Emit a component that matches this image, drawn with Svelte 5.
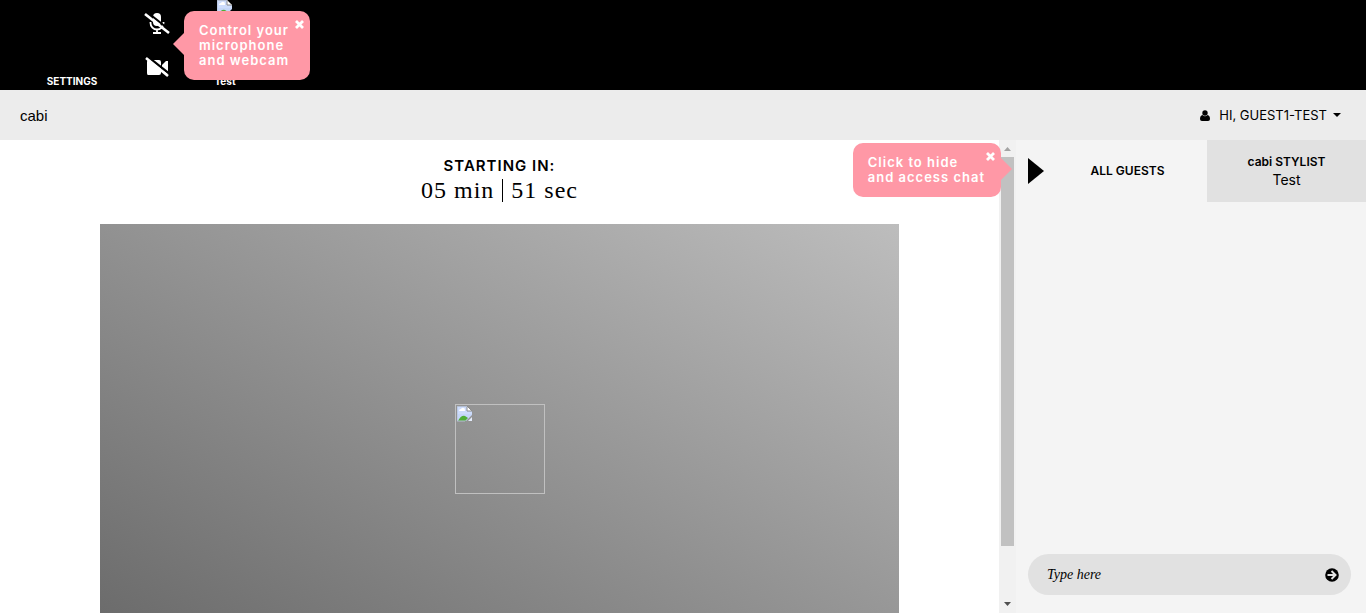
<script>
  let showDevices = $state(true);
  let showChat = $state(true);
  let message = $state('');
</script>

{#snippet broken()}
  <svg class="broken" width="16" height="16" viewBox="0 0 16 16" aria-hidden="true">
    <path d="M0 0h10l5 5v4l-6 6H0z" fill="#c5d6f8" />
    <path d="M1 1h9v5h5v2H1z" fill="#cddcfb" />
    <path d="M2 5q0-2 2-2 1-2 3-1 1 0 1 3z" fill="#fff" />
    <path d="M1 15q3-6 7-5l3 2-3 3z" fill="#4fae35" />
    <path d="M10 0l5 5h-5z" fill="#fff" stroke="#8c8c8c" />
    <path d="M11 15l4-4v4z" fill="#e4ecfb" />
    <path d="M0 0v15h8M0 .5h10" fill="none" stroke="#b4bfd4" />
  </svg>
{/snippet}

{#snippet cross()}
  <svg width="9" height="9" viewBox="0 0 9 9" aria-hidden="true">
    <path d="M1 1l7 7M8 1L1 8" stroke="#fff" stroke-width="2.8" />
  </svg>
{/snippet}

<div class="page">
  <div class="stage">
    <button class="settings">SETTINGS</button>
    <div class="devices">
      <button aria-label="Microphone">
        <svg width="26" height="22" viewBox="0 0 26 22">
          <rect x="9" y="0" width="8" height="13" rx="4" fill="#fff" />
          <path d="M6.500 9v1a6.500 6.500 0 0 0 13 0V9M13 16v4M9 20h8" fill="none" stroke="#fff" stroke-width="1.800" />
          <path d="M3 -1L27 18" stroke="#000" stroke-width="2" />
          <path d="M1 1L25 20" stroke="#fff" stroke-width="2.600" />
        </svg>
      </button>
      <button aria-label="Webcam">
        <svg width="26" height="22" viewBox="0 0 26 22">
          <path d="M4 3h11q2 0 2 2v11q0 2-2 2H4q-1 0-1-2V5q0-2 1-2zM18 8l4-4h2v13h-2l-4-4z" fill="#fff" />
          <path d="M4 0L27 18" stroke="#000" stroke-width="2.500" />
          <path d="M2 1L24 19" stroke="#fff" stroke-width="2.600" />
        </svg>
      </button>
    </div>
    <div class="person">
      {@render broken()}
      <span>Test</span>
    </div>
    {#if showDevices}
      <div class="tip left">
        Control your<br />microphone<br />and webcam
        <button aria-label="Close" onclick={() => (showDevices = false)}>{@render cross()}</button>
      </div>
    {/if}
  </div>

  <header>
    <a class="logo" href="#home">cabi</a>
    <button class="account">
      <svg width="10" height="11" viewBox="0 0 10 11" aria-hidden="true">
        <circle cx="5" cy="3" r="2.700" />
        <path d="M2.500 5Q5 7.500 7.500 5 10 5.500 10 9q0 2-2 2H2Q0 11 0 9q0-3.500 2.500-4z" />
      </svg>
      <span>HI, GUEST1-TEST</span>
      <svg width="8" height="4" viewBox="0 0 8 4" aria-hidden="true"><path d="M0 0h8L4 4z" /></svg>
    </button>
  </header>

  <main>
    <section class="show">
      <h1>STARTING IN:</h1>
      <p class="timer">05 min <i></i> 51 sec</p>
      <div class="video">
        <div class="poster">{@render broken()}</div>
      </div>
    </section>
    <div class="scroll" aria-hidden="true">
      <svg width="15" height="17" viewBox="0 0 15 17"><path d="M4 11h7L7.500 7z" fill="#a3a3a3" /></svg>
      <div class="track"><div class="thumb"></div></div>
      <svg width="15" height="17" viewBox="0 0 15 17"><path d="M4 6h7l-3.500 4z" fill="#505050" /></svg>
    </div>
    <aside>
      <nav>
        <button class="toggle" aria-label="Hide chat">
          <svg width="16" height="26" viewBox="0 0 16 26"><path d="M0 0l16 13L0 26z" /></svg>
        </button>
        <button class="tab">ALL GUESTS</button>
        <button class="tab stylist">cabi STYLIST<span>Test</span></button>
      </nav>
      <form onsubmit={(e) => e.preventDefault()}>
        <input aria-label="Message" placeholder="Type here" bind:value={message} />
        <button aria-label="Send">
          <svg width="14" height="14" viewBox="0 0 14 14">
            <circle cx="7" cy="7" r="6.800" />
            <path d="M2.500 7H10M6.500 3l4 4-4 4" fill="none" stroke="#e1e1e1" stroke-width="2" />
          </svg>
        </button>
      </form>
      {#if showChat}
        <div class="tip right">
          Click to hide<br />and access chat
          <button aria-label="Close" onclick={() => (showChat = false)}>{@render cross()}</button>
        </div>
      {/if}
    </aside>
  </main>
</div>

<style>
  :global(body) {
    margin: 0;
  }
  .page {
    display: flex;
    flex-direction: column;
    height: 100vh;
    overflow: hidden;
    font-family: Inter, 'Open Sans', sans-serif;
    font-size: 12px;
    color: #000;
  }
  button {
    padding: 0;
    border: 0;
    background: none;
    color: inherit;
    font: inherit;
    cursor: pointer;
  }
  svg {
    display: block;
    flex: none;
  }
  .stage {
    position: relative;
    display: flex;
    flex: none;
    height: 90px;
    background: #000;
    color: #fff;
    font-size: 10px;
    font-weight: 700;
  }
  .settings {
    width: 144px;
    padding-bottom: 3px;
    align-self: flex-end;
  }
  .devices {
    display: flex;
    flex-direction: column;
    gap: 22px;
    padding-top: 13px;
  }
  .devices button {
    height: 22px;
  }
  .person {
    display: flex;
    flex-direction: column;
    align-items: center;
    justify-content: space-between;
    width: 110px;
    padding-bottom: 3px;
  }
  .tip {
    position: absolute;
    z-index: 2;
    box-sizing: border-box;
    padding: 12px 16px 12px 15px;
    border-radius: 10px;
    background: #ff98a6;
    color: #fff;
    font-size: 13px;
    font-weight: 600;
    line-height: 15px;
    letter-spacing: 1px;
    white-space: nowrap;
  }
  .tip button {
    position: absolute;
    top: 9px;
    right: 6px;
  }
  .tip::before {
    content: '';
    position: absolute;
    border: 11px solid transparent;
  }
  .left {
    top: 11px;
    left: 184px;
    min-width: 126px;
  }
  .left::before {
    top: 22px;
    right: 100%;
    border-left: 0;
    border-right-color: #ff98a6;
  }
  .right {
    top: 3px;
    right: 365px;
    min-width: 148px;
  }
  .right::before {
    top: 15px;
    left: 100%;
    border-right: 0;
    border-left-color: #ff98a6;
  }
  header {
    display: flex;
    flex: none;
    align-items: center;
    justify-content: space-between;
    height: 50px;
    padding: 0 25px 0 20px;
    background: #ececec;
  }
  .logo {
    color: #000;
    font-family: 'Liberation Sans Narrow', 'Liberation Sans', sans-serif;
    font-size: 15px;
    text-decoration: none;
  }
  .account {
    display: flex;
    align-items: center;
    gap: 6px;
    font-size: 13px;
  }
  .account span {
    padding-left: 3px;
  }
  main {
    position: relative;
    display: flex;
    flex: 1;
    min-height: 0;
  }
  .show {
    flex: 1;
    overflow: hidden;
    text-align: center;
  }
  h1 {
    margin: 16px 0 0;
    font-size: 15px;
    font-weight: 600;
    line-height: 20px;
    letter-spacing: 1px;
  }
  .timer {
    display: flex;
    justify-content: center;
    gap: 8px;
    margin: 0 0 20px;
    font-family: 'Liberation Serif', serif;
    font-size: 24px;
    line-height: 28px;
    letter-spacing: 1px;
  }
  .timer i {
    width: 1px;
    height: 23px;
    margin-top: 3px;
    background: #000;
  }
  .video {
    display: flex;
    align-items: center;
    justify-content: center;
    width: 80%;
    height: 450px;
    margin: 0 auto;
    background: linear-gradient(to top right, #666, #bdbdbd);
  }
  .poster {
    box-sizing: border-box;
    width: 90px;
    height: 90px;
    padding: 1px;
    border: 1px solid #c0c0c0;
  }
  .scroll {
    display: flex;
    flex-direction: column;
    flex: none;
    width: 15px;
    padding: 0 1px;
    background: #f1f1f1;
  }
  .track {
    flex: 1;
    padding: 0 1px;
  }
  .thumb {
    height: calc(100% - 50px);
    background: #c1c1c1;
  }
  aside {
    display: flex;
    flex-direction: column;
    justify-content: space-between;
    flex: none;
    width: 350px;
    background: #f4f4f4;
  }
  nav {
    display: flex;
    height: 62px;
  }
  .toggle {
    width: 32px;
    padding-left: 12px;
  }
  .tab {
    flex: 1;
    font-weight: 600;
    line-height: 18px;
  }
  .stylist {
    background: #e1e1e1;
  }
  .stylist span {
    display: block;
    font-size: 14px;
    font-weight: 400;
  }
  form {
    display: flex;
    align-items: center;
    height: 41px;
    margin: 0 15px 18px 12px;
    padding: 0 12px 0 19px;
    box-sizing: border-box;
    border-radius: 21px;
    background: #e1e1e1;
  }
  input {
    flex: 1;
    min-width: 0;
    padding: 0;
    border: 0;
    outline: 0;
    background: none;
    font: italic 14px 'Liberation Serif', serif;
  }
  input::placeholder {
    color: #000;
    opacity: 1;
  }
</style>
